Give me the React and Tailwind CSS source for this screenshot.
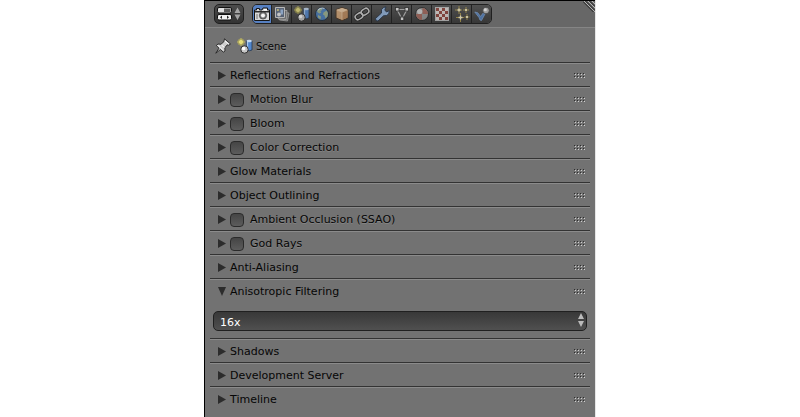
import { useState } from "react";

const tabs = [
  "Render", "Render Layers", "Scene", "World", "Object", "Constraints",
  "Modifiers", "Object Data", "Material", "Texture", "Particles", "Physics",
];

function SceneShape() {
  return (
    <>
      <circle cx="4" cy="4" r="3.500" fill="#c9c04a" opacity=".55" />
      <circle cx="4" cy="4" r="2" fill="#f3ea8c" />
      <path d="M4 0v8M0 4h8" stroke="#ddd36a" strokeWidth=".6" />
      <path d="M9.500 3v9q3 1.500 5.500 0V3z" fill="#5288cf" stroke="#23354e" strokeWidth=".8" />
      <path d="M10.500 4v8" stroke="#a9c8ee" strokeWidth="1.300" />
      <ellipse cx="12.200" cy="3" rx="2.700" ry="1.300" fill="#c3d9f2" />
      <circle cx="7.500" cy="11.500" r="3.700" fill="#c8c8c8" stroke="#262626" strokeWidth=".9" />
      <circle cx="6.600" cy="10.500" r="1.700" fill="#fff" />
    </>
  );
}

function TabShape({ name }) {
  switch (name) {
    case "Render":
      return (
        <>
          <path d="M.5 4h2V2.500h3V4h2.500l1-2h4.500v2h2v10.500H.5z" fill="#d9d9d9" stroke="#151515" />
          <path d="M1 5h14v1.500H1z" fill="#2b2b2b" />
          <path d="M10 3h3v1.500h-3z" fill="#fff" />
          <path d="M2 8h2v5H2z" fill="#a5a5a5" />
          <circle cx="9" cy="9.500" r="3.600" fill="#777" stroke="#333" strokeWidth=".7" />
          <circle cx="9" cy="9.500" r="2" fill="#f4f4f4" />
        </>
      );
    case "Render Layers":
      return (
        <>
          <path d="M7 6l8 1-1.500 8-8-1z" fill="#777" stroke="#bbb" strokeWidth=".8" />
          <path d="M5 4l8 .5-.8 9-8-.5z" fill="#777" stroke="#ccc" strokeWidth=".8" />
          <path d="M1.500 1.500h9v10h-9z" fill="#5f6e86" stroke="#dcdcdc" />
          <path d="M6.500 3.500H9v5H6.500z" fill="#a4c3ec" />
          <circle cx="5" cy="8.500" r="1.900" fill="#eee" />
          <circle cx="3.900" cy="4" r="1.100" fill="#eee08a" />
        </>
      );
    case "Scene":
      return <SceneShape />;
    case "World":
      return (
        <>
          <circle cx="8" cy="8" r="6.500" fill="#4a80c0" stroke="#1e2c3c" />
          <path d="M2.800 5q2-3 5-3l.5 2-2 1 1 1.500-2 1-1.500-1zM9.500 6.500l3-2 1.500 2.500-.5 3.500-2 2-1-3-1.500-1zM4 9l3 1.500-.5 3-2.500-2z" fill="#9fb592" />
          <path d="M4 4q3-3 6.500-1.500" stroke="#d5e7f0" strokeWidth="1.200" fill="none" />
        </>
      );
    case "Object":
      return (
        <>
          <path d="M8 1.500l6 2v8.500l-6 2.500L2 12V3.500z" fill="#d8a878" stroke="#44301e" />
          <path d="M8 2l5.500 1.800L8 6 2.500 3.800z" fill="#f0cda4" />
          <path d="M8 6l5.500-2v7.800L8 14z" fill="#c28d5c" />
          <path d="M2.800 4L8 6v7.500M8 6l5.200-2" stroke="#f3d1ac" strokeWidth=".7" fill="none" />
        </>
      );
    case "Constraints":
      return (
        <g fill="none">
          <g stroke="#1f1f1f" strokeWidth="3.200">
            <rect x="7" y="3" width="8" height="5.500" rx="2.700" transform="rotate(-35 11 5.700)" />
            <rect x="1" y="7.500" width="8" height="5.500" rx="2.700" transform="rotate(-35 5 10.300)" />
          </g>
          <g stroke="#d0d0d0" strokeWidth="1.500">
            <rect x="7" y="3" width="8" height="5.500" rx="2.700" transform="rotate(-35 11 5.700)" />
            <rect x="1" y="7.500" width="8" height="5.500" rx="2.700" transform="rotate(-35 5 10.300)" />
          </g>
        </g>
      );
    case "Modifiers":
      return (
        <path d="M1.500 12.500l6-5.500q-1-4 2-5.500l2.500-.7-1.200 3.200L12.500 6l2.800-1.400q.3 4-2.800 5l-3 .2-5.500 5.200q-2.500.5-2.500-2.500z" fill="#94b7e2" stroke="#1d2d44" strokeWidth=".9" />
      );
    case "Object Data":
      return (
        <>
          <path d="M3 3.500h10L8 13z" fill="none" stroke="#bbb" strokeWidth="1.200" />
          <g fill="#f0f0f0" stroke="#252525" strokeWidth=".8">
            <rect x="1.500" y="1.500" width="3.500" height="3.500" />
            <rect x="11" y="1.500" width="3.500" height="3.500" />
            <rect x="6.300" y="11" width="3.500" height="3.500" />
          </g>
        </>
      );
    case "Material":
      return (
        <>
          <circle cx="8" cy="8" r="6.500" fill="#9b9b9b" stroke="#282828" />
          <path d="M8.500 8V2A6 6 0 0 1 14 8zM8 8v6A6 6 0 0 1 2 8z" fill="#a8695c" />
          <circle cx="5.700" cy="5.500" r="2.600" fill="#fff" opacity=".6" />
        </>
      );
    case "Texture":
      return (
        <>
          <rect x="1.500" y="1.500" width="13" height="13" fill="#e6deda" stroke="#c2c2c2" />
          <path d="M2 2h3v3H2zm6 0h3v3H8zM5 5h3v3H5zm6 0h3v3h-3zM2 8h3v3H2zm6 0h3v3H8zm-3 3h3v3H5zm6 0h3v3h-3z" fill="#94453b" />
        </>
      );
    case "Particles":
      return (
        <>
          <path d="M5 0v8M1 4h7M12 1v6M9 4h6M6.500 7v9M2 11.500h8M13 8v6M10.500 11h5" stroke="#ab974a" strokeWidth="1" />
          <path d="M5 2.500v3M3.500 4h3M12 3v2M11 4h2M6.500 9.500v4M4.500 11.500h4M13 10v2M12 11h2" stroke="#fff6cc" strokeWidth="1.300" />
        </>
      );
    default:
      return (
        <>
          <path d="M.8 6l3 .8L6.500 10.500 10 6l1.500 1-4 7.500-1.500-.5-1-2.500z" fill="#5583c2" stroke="#7fa5d6" strokeWidth=".8" />
          <circle cx="12" cy="4.500" r="3.300" fill="#bdbdbd" stroke="#333" strokeWidth=".7" />
          <circle cx="11.300" cy="3.700" r="1.500" fill="#fff" />
        </>
      );
  }
}

function Icon({ children }) {
  return <svg className="size-4 shrink-0" viewBox="0 0 16 16" aria-hidden="true">{children}</svg>;
}

function Grip() {
  return (
    <svg className="h-[6px] w-[12px] shrink-0" viewBox="0 0 12 6" shapeRendering="crispEdges" aria-hidden="true">
      {[0, 3, 6, 9].map((x) => [0, 3].map((y) => (
        <g key={`${x}-${y}`}>
          <rect x={x} y={y} width="1" height="1" fill="#2e2e2e" />
          <rect x={x + 1} y={y + 1} width="1" height="1" fill="#d0d0d0" />
        </g>
      )))}
    </svg>
  );
}

function Section({ title, toggle, initiallyOpen = false, children }) {
  const [open, setOpen] = useState(initiallyOpen);
  return (
    <section className="border-t border-[#333333]">
      <div className="flex h-[23px] items-center border-t border-[#8b8b8b] pt-px pr-1">
        <button type="button" aria-expanded={open} aria-label={toggle ? `Expand ${title}` : undefined} onClick={() => setOpen(!open)} className={`flex h-full items-center gap-1 pl-2 ${toggle ? "pr-1" : "flex-1"}`}>
          <svg className="h-[9px] w-2 shrink-0" viewBox="0 0 8 9" aria-hidden="true">
            <path d={open ? "M0 0h8L4 9z" : "M0 0l8 4.500L0 9z"} fill="#2c2c2c" />
          </svg>
          {!toggle && <span>{title}</span>}
        </button>
        {toggle && (
          <label className="flex flex-1 items-center gap-[6px]">
            <input type="checkbox" className="size-[14px] appearance-none rounded-[4px] border border-[#2b2b2b] bg-linear-to-b from-[#454545] to-[#5c5c5c] checked:bg-[#8a8a8a]" />
            <span>{title}</span>
          </label>
        )}
        <Grip />
      </div>
      {open && children}
    </section>
  );
}

export default function App() {
  const [active, setActive] = useState("Render");
  return (
    <div className="min-h-screen bg-white font-['DejaVu_Sans',sans-serif] text-[11px] leading-[17px] text-[#060606]">
      <main className="relative mx-auto min-h-screen max-w-[392px] border-r border-l border-r-[#e6e6e6] border-l-black bg-[#727272] text-shadow-[0_1px_0_#858585]">
        <header className="flex h-7 items-center gap-2 border-t border-b border-t-black border-b-[#858585] bg-[#676767] pl-[9px]">
          <button type="button" aria-label="Editor type" className="flex h-5 w-[30px] items-center justify-center rounded-[5px] border border-[#202020] bg-linear-to-b from-[#4c4c4c] to-[#333333]">
            <svg className="h-4 w-[26px] shrink-0" viewBox="0 0 26 16" aria-hidden="true">
              <rect x="1.500" y="1.500" width="14" height="5.500" rx="1.500" fill="#e0e0e0" stroke="#111" />
              <rect x="8" y="2.500" width="6.500" height="3.500" fill="#5c5c5c" />
              <rect x="1.500" y="8.500" width="14" height="5.500" rx="1.500" fill="#f2f2f2" stroke="#111" />
              <path d="M6 9.500v3.500L4 11.300zM11 9.500v3.500l2-1.700z" fill="#222" />
              <path d="M18.500 7l3-5.500 3 5.500zM18.500 8.500h6l-3 5.500z" fill="#a5a5a5" />
            </svg>
          </button>
          <nav className="flex overflow-hidden rounded-[5px] border border-[#202020]" aria-label="Properties">
            {tabs.map((name) => (
              <button key={name} type="button" aria-label={name} aria-pressed={active === name} onClick={() => setActive(name)} className={`flex h-[18px] w-5 items-center justify-center border-r border-[#222222] first:w-[19px] last:w-[19px] last:border-r-0 ${active === name ? "bg-[#5680c2]" : "bg-linear-to-b from-[#505050] to-[#383838] *:opacity-75"}`}>
                <Icon><TabShape name={name} /></Icon>
              </button>
            ))}
          </nav>
        </header>
        <svg className="absolute top-0 right-0 h-3 w-3" viewBox="0 0 12 12" aria-hidden="true">
          <path d="M1 1l11 11M5 1l7 7M9 1l3 3" stroke="#b5b5b5" />
          <path d="M2.500 1L12 10.500M6.500 1L12 6.500M0 1.500L10.500 12" stroke="#222" />
        </svg>
        <div className="flex h-[34px] items-center gap-[6px] pt-[2px] pl-[10px]">
          <button type="button" aria-label="Pin context">
            <Icon>
              <path d="M9.500.8l6 5.200-1.700 1.200-1.500-.4-2.500 3 .2 3.200-1.700 1.200-2.800-2.800L.8 15.200 4 10.200 1.300 7.500 3 6l3 .3 3-2.800z" fill="#cfcfcf" stroke="#222" strokeWidth=".9" />
              <path d="M9.800 2.800l4 3.400M6.500 7l3 2.500M3 7.300l4.500 4.500" stroke="#fff" strokeWidth=".9" />
            </Icon>
          </button>
          <div className="flex items-center gap-[3px]">
            <Icon><SceneShape /></Icon>
            <span className="text-[10px]">Scene</span>
          </div>
        </div>
        <div className="px-[5px]">
          <Section title="Reflections and Refractions" />
          <Section title="Motion Blur" toggle />
          <Section title="Bloom" toggle />
          <Section title="Color Correction" toggle />
          <Section title="Glow Materials" />
          <Section title="Object Outlining" />
          <Section title="Ambient Occlusion (SSAO)" toggle />
          <Section title="God Rays" toggle />
          <Section title="Anti-Aliasing" />
          <Section title="Anisotropic Filtering" initiallyOpen>
            <div className="relative px-[3px] pt-[9px] pb-[7px]">
              <select aria-label="Anisotropic Filtering" defaultValue="16x" className="block h-5 w-full appearance-none rounded-[5px] border border-[#202020] bg-linear-to-b from-[#383838] to-[#505050] px-[6px] pt-[2px] text-white text-shadow-none">
                <option>2x</option>
                <option>4x</option>
                <option>8x</option>
                <option>16x</option>
              </select>
              <svg className="pointer-events-none absolute top-[11px] right-[6px] h-[14px] w-[6px]" viewBox="0 0 6 14" aria-hidden="true">
                <path d="M0 6l3-6 3 6zM0 8h6l-3 6z" fill="#bbb" />
              </svg>
            </div>
          </Section>
          <Section title="Shadows" />
          <Section title="Development Server" />
          <Section title="Timeline" />
        </div>
      </main>
    </div>
  );
}
